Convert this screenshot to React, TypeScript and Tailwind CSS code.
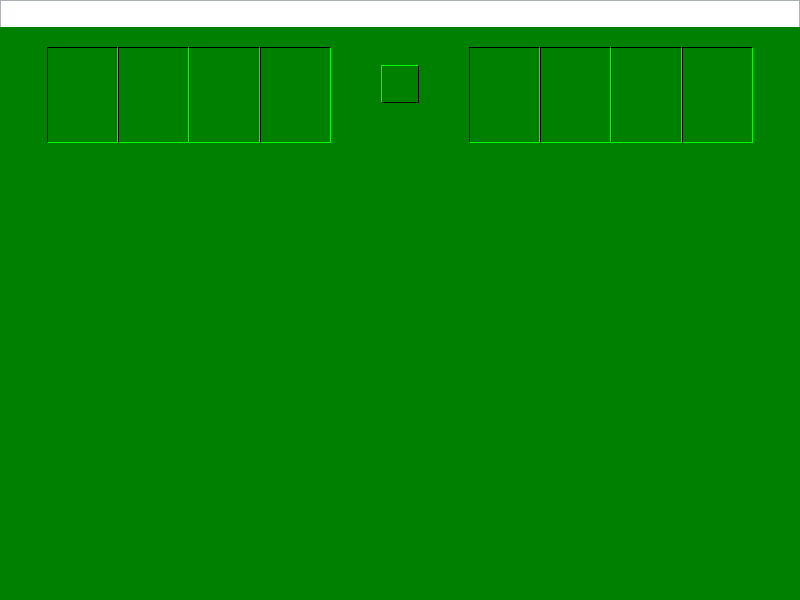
export default function App() {
  const cells = [0, 1, 2, 3];

  return (
    <div className="w-[800px] h-[600px] flex flex-col bg-[#008000]">
      {/* menu bar */}
      <div className="h-[27px] bg-white border-t border-l border-r border-[#acb1b8]"></div>

      {/* table */}
      <div className="flex-1 flex items-start pt-[20px] px-[47px] gap-[50px]">
        <div className="flex">
          {cells.map((i) => (
            <div
              key={i}
              className="w-[71px] h-[96px] border-t border-l border-black border-r-[#00ff00] border-b-[#00ff00] border-r border-b"
            ></div>
          ))}
        </div>

        <div className="mt-[18px] w-[38px] h-[38px] border border-t-[#00ff00] border-l-[#00ff00] border-r-black border-b-black"></div>

        <div className="flex">
          {cells.map((i) => (
            <div
              key={i}
              className="w-[71px] h-[96px] border-t border-l border-black border-r-[#00ff00] border-b-[#00ff00] border-r border-b"
            ></div>
          ))}
        </div>
      </div>
    </div>
  );
}
